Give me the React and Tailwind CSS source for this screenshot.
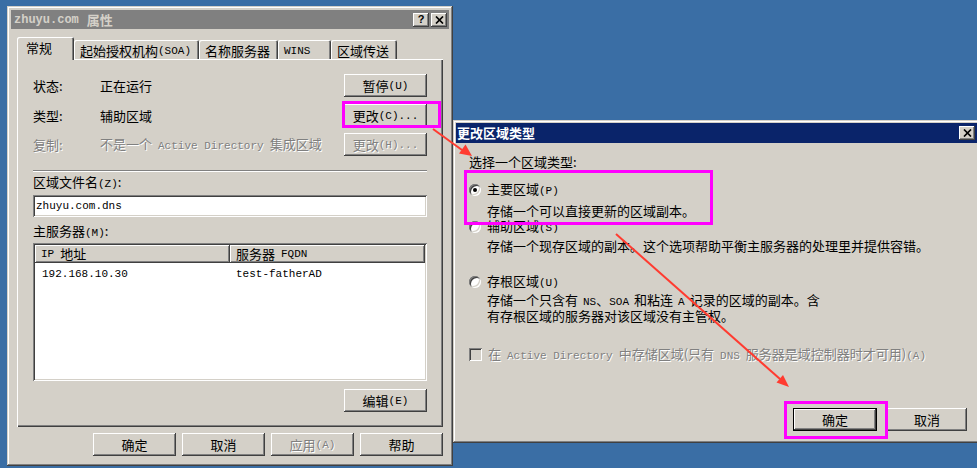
import React from "react";

// classic win32 bevels
const RAISED =
  "shadow-[inset_-1px_-1px_#404040,inset_1px_1px_#ffffff,inset_-2px_-2px_#808080,inset_2px_2px_#d4d0c8]";
const WIN =
  "shadow-[inset_-1px_-1px_#404040,inset_1px_1px_#d4d0c8,inset_-2px_-2px_#808080,inset_2px_2px_#ffffff]";
const SUNKEN =
  "shadow-[inset_1px_1px_#808080,inset_-1px_-1px_#ffffff,inset_2px_2px_#404040,inset_-2px_-2px_#d4d0c8]";
const DIS = "text-[#808080] [text-shadow:1px_1px_0_#ffffff]";

const L = ({ children, className = "" }) => (
  <span className={`font-['Liberation_Mono',monospace] text-[11px] ${className}`}>{children}</span>
);

const Btn = ({ children, w = "w-[83px]", disabled, def }) => (
  <div
    className={`${w} h-[23px] shrink-0 flex items-center justify-center bg-[#d4d0c8] ${RAISED} ${
      def ? "border border-black" : ""
    } ${disabled ? DIS : "text-black"}`}>
    {children}
  </div>
);

const XGlyph = () => (
  <svg width="9" height="8" viewBox="0 0 9 8">
    <path d="M1 0.5 L8 7.5 M8 0.5 L1 7.5" stroke="#000" strokeWidth="1.7" />
  </svg>
);

const CapBtn = ({ children }) => (
  <div className={`w-[16px] h-[14px] bg-[#d4d0c8] flex items-center justify-center ${RAISED}`}>
    {children}
  </div>
);

const Radio = ({ on }) => (
  <div className={`relative w-[12px] h-[12px] shrink-0 rounded-full bg-white ${SUNKEN}`}>
    {on && <div className="absolute left-[4px] top-[4px] w-[4px] h-[4px] rounded-full bg-black" />}
  </div>
);

const Tab = ({ children, w, active }) => (
  <div
    className={`${w} flex items-center pl-[6px] bg-[#d4d0c8] rounded-t-[2px] shadow-[inset_1px_1px_#ffffff,inset_-1px_0_#404040,inset_-2px_0_#808080] ${
      active ? "h-[23px] -mb-[1px] pl-[9px] pb-[1px]" : "h-[19px] pt-[2px]"
    }`}>
    {children}
  </div>
);

const PropsWindow = () => (
  <div className={`absolute left-[7px] top-[6px] w-[446px] h-[460px] bg-[#d4d0c8] p-[4px] flex flex-col ${WIN}`}>
    {/* inactive caption */}
    <div className="h-[19px] bg-[#808080] flex items-center pl-[3px] pr-[2px]">
      <L className="text-[12px] font-bold text-[#d4d0c8]">zhuyu.com</L>
      <span className="ml-[8px] font-bold text-[#d4d0c8] text-[13px]">属性</span>
      <div className="ml-auto flex gap-[2px]">
        <CapBtn>
          <span className="font-['Liberation_Sans',sans-serif] font-bold text-[11px] leading-none">?</span>
        </CapBtn>
        <CapBtn>
          <XGlyph />
        </CapBtn>
      </div>
    </div>

    <div className="px-[6px] flex flex-col">
      <div className="relative z-10 mt-[8px] flex items-end h-[22px]">
        <Tab w="w-[57px]" active>常规</Tab>
        <Tab w="w-[125px]">
          起始授权机构<L>(SOA)</L>
        </Tab>
        <Tab w="w-[79px]">名称服务器</Tab>
        <Tab w="w-[53px]">
          <L>WINS</L>
        </Tab>
        <Tab w="w-[66px]">区域传送</Tab>
      </div>

      <div className="h-[368px] bg-[#d4d0c8] flex flex-col px-[16px] pt-[15px] shadow-[inset_1px_1px_#ffffff,inset_-1px_-1px_#404040,inset_-2px_-2px_#808080]">
        <div className="flex items-center h-[23px]">
          <span className="w-[67px]">状态:</span>
          <span>正在运行</span>
          <div className="ml-auto">
            <Btn>
              暂停<L>(U)</L>
            </Btn>
          </div>
        </div>
        <div className="mt-[7px] flex items-center h-[23px]">
          <span className="w-[67px]">类型:</span>
          <span>辅助区域</span>
          <div className="ml-auto">
            <Btn>
              更改<L>(C)...</L>
            </Btn>
          </div>
        </div>
        <div className={`mt-[6px] flex items-center h-[23px] ${DIS}`}>
          <span className="w-[67px]">复制:</span>
          <span>
            不是一个<L className="mx-[6px]">Active Directory</L>集成区域
          </span>
          <div className="ml-auto">
            <Btn disabled>
              更改<L>(H)...</L>
            </Btn>
          </div>
        </div>

        <div className="mt-[14px] border-t border-t-[#808080] border-b border-b-white" />

        <div className="mt-[2px]">
          区域文件名<L>(Z)</L>:
        </div>
        <div className={`mt-[3px] h-[22px] bg-white flex items-center pl-[3px] ${SUNKEN}`}>
          <L>zhuyu.com.dns</L>
        </div>

        <div className="mt-[6px]">
          主服务器<L>(M)</L>:
        </div>
        <div className={`mt-[2px] h-[138px] bg-white p-[2px] flex flex-col ${SUNKEN}`}>
          <div className="flex h-[18px]">
            <div className={`w-[195px] flex items-center pl-[6px] bg-[#d4d0c8] ${RAISED}`}>
              <L className="mr-[6px]">IP</L>地址
            </div>
            <div className={`flex-1 flex items-center pl-[6px] bg-[#d4d0c8] ${RAISED}`}>
              服务器<L className="ml-[6px]">FQDN</L>
            </div>
          </div>
          <div className="flex h-[16px] mt-[2px] items-center">
            <div className="w-[195px] pl-[7px]">
              <L>192.168.10.30</L>
            </div>
            <div className="pl-[6px]">
              <L>test-fatherAD</L>
            </div>
          </div>
        </div>

        <div className="mt-[8px] self-end">
          <Btn>
            编辑<L>(E)</L>
          </Btn>
        </div>
      </div>

      <div className="mt-[6px] flex justify-end gap-[6px]">
        <Btn>确定</Btn>
        <Btn>取消</Btn>
        <Btn disabled>
          应用<L>(A)</L>
        </Btn>
        <Btn>帮助</Btn>
      </div>
    </div>
  </div>
);

const ZoneTypeDialog = () => (
  <div className={`absolute left-[453px] top-[120px] w-[527px] h-[323px] bg-[#d4d0c8] p-[3px] flex flex-col ${WIN}`}>
    <div className="h-[20px] bg-[#0a246a] flex items-center pl-[1px] pr-[2px]">
      <span className="font-bold text-white text-[13px]">更改区域类型</span>
      <div className="ml-auto">
        <CapBtn>
          <XGlyph />
        </CapBtn>
      </div>
    </div>

    <div className="pl-[13px] flex flex-col leading-[15px]">
      <div className="mt-[11px]">选择一个区域类型:</div>

      <div className="mt-[13px] flex items-center h-[15px]">
        <Radio on />
        <span className="ml-[6px]">
          主要区域<L>(P)</L>
        </span>
      </div>
      <div className="mt-[7px] pl-[18px] leading-[14px]">存储一个可以直接更新的区域副本。</div>

      <div className="mt-[1px] flex items-center h-[15px]">
        <Radio />
        <span className="ml-[6px]">
          辅助区域<L>(S)</L>
        </span>
      </div>
      <div className="mt-[4px] pl-[18px]">存储一个现存区域的副本。这个选项帮助平衡主服务器的处理里并提供容错。</div>

      <div className="mt-[21px] flex items-center h-[15px]">
        <Radio />
        <span className="ml-[6px]">
          存根区域<L>(U)</L>
        </span>
      </div>
      <div className="mt-[4px] pl-[18px] leading-[14px]">
        存储一个只含有<L className="ml-[5px]">NS</L>、<L className="mr-[5px]">SOA</L>和粘连<L className="mx-[5px]">A</L>记录的区域的副本。含
        <br />
        有存根区域的服务器对该区域没有主管权。
      </div>

      <div className="mt-[24px] flex items-center h-[15px]">
        <div className={`w-[13px] h-[13px] shrink-0 bg-[#d4d0c8] ${SUNKEN}`} />
        <span className={`ml-[6px] ${DIS}`}>
          在<L className="mx-[6px]">Active Directory</L>中存储区域(只有<L className="mx-[6px]">DNS</L>服务器是域控制器时才可用)<L>(A)</L>
        </span>
      </div>
    </div>

    <div className="mt-[46px] self-end mr-[10px] flex gap-[10px]">
      <Btn w="w-[84px]" def>
        确定
      </Btn>
      <Btn w="w-[80px]">取消</Btn>
    </div>
  </div>
);

// red arrows + magenta highlight boxes drawn on top of the screenshot
const Annotations = () => (
  <>
    <div className="absolute left-[342px] top-[101px] w-[99px] h-[27px] border-[3px] border-[#ff00ff]" />
    <div className="absolute left-[464px] top-[170px] w-[249px] h-[55px] border-[3px] border-[#ff00ff]" />
    <div className="absolute left-[784px] top-[401px] w-[104px] h-[38px] border-[3px] border-[#ff00ff]" />
    <svg className="absolute inset-0 pointer-events-none" width="977" height="468">
      <line x1="433" y1="129" x2="462" y2="150" stroke="#ff3b30" strokeWidth="2" />
      <polygon points="472,156 459,153.5 465.5,144.5" fill="#ff3b30" />
      <line x1="616" y1="234" x2="780" y2="379" stroke="#ff3b30" strokeWidth="2" />
      <polygon points="789,387 776.5,382.5 783,375" fill="#ff3b30" />
    </svg>
  </>
);

export default function App() {
  return (
    <div className="relative w-[977px] h-[468px] overflow-hidden bg-[#3a6ea5] font-['Noto_Sans_CJK_SC',sans-serif] text-[13px] leading-[16px] text-black">
      <PropsWindow />
      <ZoneTypeDialog />
      <Annotations />
    </div>
  );
}
